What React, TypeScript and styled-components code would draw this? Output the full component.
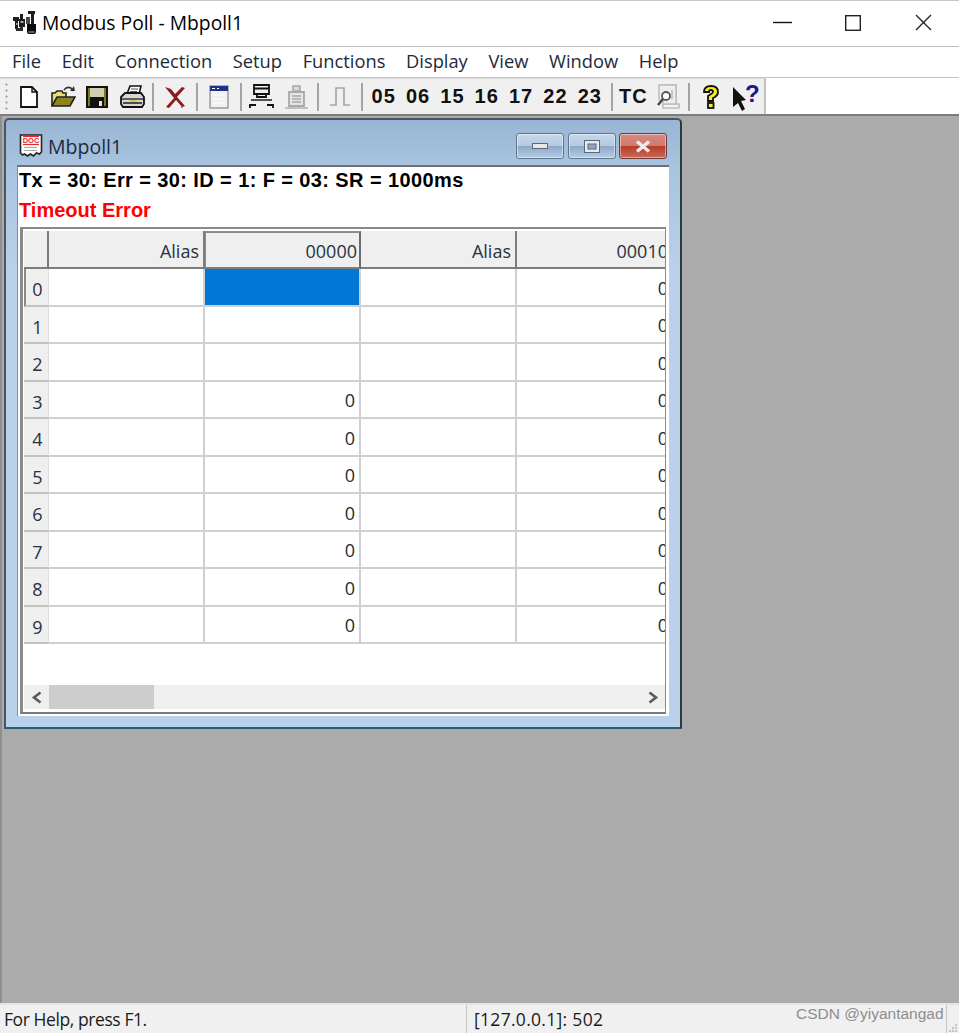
import styled, { createGlobalStyle } from "styled-components";

const GlobalStyle = createGlobalStyle`
  html, body {
    margin: 0;
    padding: 0;
    background: #ababab;
  }
  #root {
    width: 959px;
    height: 1033px;
    overflow: hidden;
  }
`;

const Page = styled.div`
  width: 959px;
  height: 1033px;
  display: flex;
  flex-direction: column;
  font-family: "Open Sans", "Noto Sans", sans-serif;
  color: #111;
`;

/* main frame */
const TitleBar = styled.div`
  height: 46px;
  box-sizing: border-box;
  border-top: 1px solid #c8c8c8;
  background: #fff;
  display: flex;
  align-items: center;
  padding: 0 0 2px 13px;
`;

const AppTitle = styled.div`
  margin-left: 5px;
  font-size: 19.3px;
  color: #000;
  flex: 1;
`;

const CaptionButton = styled.div`
  width: 70.5px;
  height: 44px;
  display: flex;
  align-items: center;
  justify-content: center;
`;

const MenuBar = styled.div`
  height: 32px;
  box-sizing: border-box;
  border-top: 1px solid #bdbdbd;
  border-bottom: 1px solid #c4c4c4;
  background: #fff;
  display: flex;
  align-items: center;
  gap: 20.7px;
  padding: 0 0 3px 12px;
  font-size: 18.3px;
  color: #1c2a3c;
`;

const ToolbarRow = styled.div`
  height: 38px;
  box-sizing: border-box;
  display: flex;
  background: #fff;
  border-bottom: 2px solid #7d7d7d;
`;

const Toolbar = styled.div`
  width: 766px;
  box-sizing: border-box;
  display: flex;
  align-items: center;
  padding-left: 5px;
  background: #f0f0f0;
  border-top: 1px solid #d9d9d9;
  border-right: 2px solid #c0c0c0;
`;

const Grip = styled.div`
  width: 6.5px;
  height: 28px;
  background-image: radial-gradient(circle at 1.5px 1.5px, #b4b4b4 1.3px, transparent 1.4px);
  background-size: 4px 6px;
  background-repeat: repeat-y;
`;

const ToolButton = styled.div`
  width: 34.35px;
  height: 32px;
  display: flex;
  align-items: center;
  justify-content: center;
  font-family: "Liberation Sans", sans-serif;
  font-weight: 700;
  font-size: 20px;
  letter-spacing: 1px;
  color: #111;
`;

const ToolSep = styled.div`
  width: 2px;
  height: 28px;
  margin: 0 3.6px;
  background: #a4a4a4;
`;

/* MDI area */
const Workspace = styled.div`
  flex: 1;
  background: #ababab;
  padding: 2px 0 0 4px;
  border-left: 2px solid #8f8f8f;
`;

const ChildWindow = styled.div`
  width: 678px;
  height: 611px;
  margin-left: -2px;
  box-sizing: border-box;
  border: 2px solid #4c5660;
  border-right-color: #2b3a40;
  border-bottom-color: #25606c;
  border-radius: 5px 5px 0 0;
  background: linear-gradient(180deg, #9ab5d3 0%, #a9c4e0 8%, #b9d1ea 25%);
  display: flex;
  flex-direction: column;
  padding: 0 11px 11px 11px;
`;

const ChildTitle = styled.div`
  height: 45px;
  flex: none;
  display: flex;
  align-items: center;
  padding: 7px 2px 0 2px;
  box-sizing: border-box;
  font-size: 19.5px;
  color: #1b2b3f;
`;

const ChildName = styled.span`
  margin-left: 5px;
  flex: 1;
`;

const WinButton = styled.div<{ $close?: boolean }>`
  width: 48px;
  height: 26px;
  box-sizing: border-box;
  margin-left: 3.5px;
  border: 1px solid ${(p) => (p.$close ? "#6e3a38" : "#5f7690")};
  border-radius: 3px;
  background: ${(p) =>
    p.$close
      ? "linear-gradient(180deg, #d98a80 0%, #cf7a6d 48%, #b93c27 52%, #c96a58 100%)"
      : "linear-gradient(180deg, #c6d8ea 0%, #b4cbe2 48%, #8faac7 52%, #b6cde4 100%)"};
  box-shadow: inset 0 0 0 1px rgba(255, 255, 255, 0.45);
  display: flex;
  align-items: center;
  justify-content: center;
`;

const Client = styled.div`
  flex: 1;
  display: flex;
  flex-direction: column;
  background: #fff;
  border-top: 2px solid #6f6f6f;
  border-left: 1px solid #8a8a8a;
  padding: 0 3px 2px 2px;
`;

const StatusBlock = styled.div`
  height: 61px;
  margin: -1px 0 0 -1px;
  flex: none;
  font-family: "Liberation Sans", sans-serif;
  font-weight: 700;
  font-size: 20px;
  line-height: 29.5px;
  color: #000;
  white-space: nowrap;
`;

const CounterLine = styled.div`
  letter-spacing: 0.4px;
`;

const ErrorLine = styled.div`
  color: #ff0000;
`;

const GridFrame = styled.div`
  flex: 1;
  display: flex;
  flex-direction: column;
  border-top: 2px solid #8a8a8a;
  border-left: 3px solid #8a8a8a;
  border-right: 1px solid #8a8a8a;
  border-bottom: 2px solid #7a7a7a;
  padding-left: 1px;
  overflow: hidden;
`;

const SheetArea = styled.div`
  flex: 1;
  overflow: hidden;
  background: #fff;
  padding-top: 2px;
`;

const Sheet = styled.div`
  width: 650px;
  display: grid;
  grid-template-columns: 25px 156px 156px 156px 157px;
  grid-template-rows: 38px repeat(10, 37.5px);
  font-size: 18px;
`;

const HeadCell = styled.div<{ $active?: boolean }>`
  box-sizing: border-box;
  background: #efefef;
  border-bottom: 2px solid #7c7c7c;
  border-right: 2px solid ${(p) => (p.$active ? "#6c6c6c" : "#7c7c7c")};
  border-left: ${(p) => (p.$active ? "1px solid #8a8a8a" : "0")};
  border-top: ${(p) => (p.$active ? "2px solid #8a8a8a" : "0")};
  color: #26323f;
  display: flex;
  align-items: center;
  justify-content: flex-end;
  padding: ${(p) => (p.$active ? "1px 2px 0 0" : "3px 4px 0 0")};
`;

const RowHead = styled.div<{ $active?: boolean }>`
  box-sizing: border-box;
  background: #efefef;
  border-bottom: 2px solid #c2c2c2;
  border-right: 1px solid #dedede;
  border-left: ${(p) => (p.$active ? "2px solid #8a8a8a" : "0")};
  display: flex;
  align-items: center;
  justify-content: center;
  padding: 5px 0 0 ${(p) => (p.$active ? "1px" : "3px")};
  color: #26323f;
`;

const Cell = styled.div<{ $selected?: boolean }>`
  box-sizing: border-box;
  background: ${(p) => (p.$selected ? "#0078d7" : "#fff")};
  border-bottom: 2px solid #d0d0d0;
  border-right: 2px solid #d0d0d0;
  display: flex;
  align-items: center;
  justify-content: flex-end;
  padding: 2px 4px 0 0;
  color: #2a2a2a;
`;

const ScrollBar = styled.div`
  height: 24px;
  flex: none;
  margin-bottom: 3px;
  background: #efefef;
  display: flex;
  align-items: center;
`;

const ScrollArrow = styled.div`
  width: 25px;
  display: flex;
  justify-content: center;
  flex: none;
`;

const ScrollTrack = styled.div`
  flex: 1;
  height: 100%;
`;

const ScrollThumb = styled.div`
  width: 105px;
  height: 100%;
  background: #cdcdcd;
`;

/* status bar */
const StatusBar = styled.div`
  height: 30px;
  box-sizing: border-box;
  border-top: 2px solid #e4e4e4;
  background: #f0f0f0;
  display: flex;
  align-items: center;
  font-size: 17.5px;
  color: #1b1b1b;
  position: relative;
`;

const HelpPane = styled.div`
  width: 467px;
  height: 100%;
  box-sizing: border-box;
  padding: 2px 0 0 4px;
  border-right: 1px solid #c4c4c4;
  letter-spacing: -0.42px;
  white-space: nowrap;
`;

const AddressPane = styled.div`
  flex: 1;
  height: 100%;
  box-sizing: border-box;
  padding: 2px 0 0 7px;
  letter-spacing: 0.3px;
  white-space: nowrap;
`;

const Watermark = styled.div`
  position: absolute;
  left: 796px;
  top: 0;
  font-family: "Liberation Sans", sans-serif;
  font-size: 15.5px;
  color: #8d8d8d;
`;

const EndPane = styled.div`
  width: 12px;
  height: 100%;
  border-left: 1px solid #c4c4c4;
  display: flex;
  align-items: flex-end;
`;

const AppIcon = () => (
  <svg width="24" height="24" viewBox="0 0 24 24">
    <path d="M0 6h6v4H0zM2 10h3v8H2zM7 3h3v5H7zM6 8h6v8H6z" fill="#1d1d1d" />
    <path d="M7.5 10h3v2h-3zM3 12h1.5v2H3z" fill="#a5a5a5" />
    <path d="M3 17h6v3H3zM7 15h3v5H7z" fill="#2c2c2c" />
    <path d="M15 0h7v3h-7zM18 3h3v10h-3z" fill="#1d1d1d" />
    <path d="M13 6h4v7h-4z" fill="#4a4a4a" />
    <path d="M14 13h9v8q0 2-2 2h-5q-2 0-2-2z" fill="#0c0c0c" />
    <path d="M15.5 20.5h6v1h-6z" fill="#b5b5b5" />
  </svg>
);

const MinGlyph = () => (
  <svg width="20" height="3" viewBox="0 0 20 3">
    <path d="M0 1.5h19" stroke="#111" strokeWidth="1.4" />
  </svg>
);
const MaxGlyph = () => (
  <svg width="16" height="16" viewBox="0 0 16 16">
    <rect x="0.7" y="0.7" width="14.6" height="14.6" fill="none" stroke="#222" strokeWidth="1.4" />
  </svg>
);
const CloseGlyph = () => (
  <svg width="17" height="17" viewBox="0 0 17 17">
    <path d="M1 1l15 15M16 1L1 16" stroke="#222" strokeWidth="1.4" />
  </svg>
);

const NewIcon = () => (
  <svg width="20" height="22" viewBox="0 0 20 22">
    <path d="M2 1h11l5 5v15H2z" fill="#fff" stroke="#111" strokeWidth="1.8" />
    <path d="M13 1v5h5" fill="none" stroke="#111" strokeWidth="1.4" />
  </svg>
);
const OpenIcon = () => (
  <svg width="25" height="22" viewBox="0 0 25 22">
    <path d="M1 20V7h3l2-2h5l1 2h3v4" fill="#e8dd74" stroke="#222" strokeWidth="1.6" />
    <path d="M1 20l5-9h18l-5 9z" fill="#8c8420" stroke="#222" strokeWidth="1.6" />
    <path d="M13 4q3-4 7-2l2 3" fill="none" stroke="#333" strokeWidth="1.6" />
    <path d="M19 5h5l-1-5z" fill="#333" />
  </svg>
);
const SaveIcon = () => (
  <svg width="22" height="22" viewBox="0 0 22 22">
    <path d="M0 0h22v22H0z" fill="#111" />
    <path d="M2 2h2v18H2zM18 2h2v18h-2zM2 2h18v1H2z" fill="#7e7a18" />
    <path d="M4 2h14v9H4z" fill="#cfcfb0" />
    <path d="M5 14h12v7H5z" fill="#111" />
    <path d="M13 15h3v5h-3z" fill="#e6e6e6" />
  </svg>
);
const PrintIcon = () => (
  <svg width="26" height="24" viewBox="0 0 26 24">
    <path d="M8 9L11 1h11l-2 8z" fill="#fff" stroke="#111" strokeWidth="1.6" />
    <path d="M12 4h7M11 6.5h7" stroke="#555" strokeWidth="1" />
    <path d="M2 12l4-4h16l3 4v7l-2 3H4l-2-3z" fill="#d6d6d6" stroke="#111" strokeWidth="1.8" />
    <path d="M2 14h23" stroke="#111" strokeWidth="1.2" />
    <path d="M4 18h19" stroke="#111" strokeWidth="1.4" />
    <path d="M11 15h7v2h-7z" fill="#d9cc3c" />
  </svg>
);
const DeleteIcon = () => (
  <svg width="24" height="24" viewBox="0 0 24 24">
    <path d="M2 2l6 2 4 5 7-7 3 1-8 9 8 9-3 1-6-7-7 8-3-1 8-9z" fill="#8a1c1c" />
    <circle cx="19" cy="22" r="1" fill="#c44" />
  </svg>
);
const WindowIcon = () => (
  <svg width="20" height="24" viewBox="0 0 20 24">
    <path d="M1 1h18v22H1z" fill="#f0f0f0" stroke="#9a9a9a" strokeWidth="1.5" />
    <path d="M1 1h18v5H1z" fill="#22308a" />
    <path d="M3 3h3v1H3zM8 3h2v1H8z" fill="#fff" />
    <path d="M4 10h12M4 14h12M4 18h12" stroke="#fff" strokeWidth="1.2" />
  </svg>
);
const ConnectIcon = () => (
  <svg width="26" height="26" viewBox="0 0 26 26">
    <path d="M5 1h15v9H5zM5 4.5h15" fill="none" stroke="#111" strokeWidth="1.8" />
    <path d="M8 10v3h9v-3" fill="none" stroke="#111" strokeWidth="1.8" />
    <path d="M2 16h21" stroke="#111" strokeWidth="1.4" />
    <path d="M1 24v-3h6M18 21h6v3" fill="none" stroke="#111" strokeWidth="1.8" />
  </svg>
);
const DisconnectIcon = () => (
  <svg width="25" height="26" viewBox="0 0 25 26">
    <path d="M9 2h7v5H9z" fill="#d8d8d8" stroke="#a8a8a8" strokeWidth="1.6" />
    <path d="M5 8h15v14H5z" fill="#e4e4e4" stroke="#a8a8a8" strokeWidth="1.8" />
    <path d="M8 12h9M8 15h9M8 18h9" stroke="#a8a8a8" strokeWidth="1.4" />
    <path d="M1 24h23" stroke="#b4b4b4" strokeWidth="1.6" />
  </svg>
);
const PulseIcon = () => (
  <svg width="22" height="22" viewBox="0 0 22 22">
    <path d="M1 19h6V2h8v17h6" fill="none" stroke="#a6a6a6" strokeWidth="1.7" />
  </svg>
);
const ScanIcon = () => (
  <svg width="24" height="26" viewBox="0 0 24 26">
    <path d="M3 1h17v19h3v4H7v-4h13" fill="#f3f3f3" stroke="#bdbdbd" strokeWidth="1.6" />
    <path d="M3 1h17v19H7v-4H3z" fill="#eee" stroke="#bdbdbd" strokeWidth="1.4" />
    <circle cx="10" cy="12" r="4" fill="#fff" stroke="#555" strokeWidth="1.8" />
    <path d="M7 15l-5 6" stroke="#444" strokeWidth="2.4" />
    <path d="M15 6h2v9h-2z" fill="#c4c4c4" />
  </svg>
);
const HelpIcon = () => (
  <svg width="18" height="26" viewBox="0 0 18 26">
    <path
      d="M2 8q0-6 7-6t7 6q0 3-3 5l-2 1v3H6v-5l3-2q2-1 2-2.5T9 6 7 8z"
      fill="#f6ee1e"
      stroke="#111"
      strokeWidth="1.8"
    />
    <rect x="6" y="19" width="5.5" height="5" fill="#f6ee1e" stroke="#111" strokeWidth="1.8" />
  </svg>
);
const PointerHelpIcon = () => (
  <svg width="27" height="28" viewBox="0 0 27 28">
    <path d="M1 4l13 13-5 1 4 8-3 2-4-8-5 4z" fill="#111" />
    <text
      x="13"
      y="19"
      fontFamily="Liberation Sans, sans-serif"
      fontWeight="700"
      fontSize="24"
      fill="#1a1a8c"
    >
      ?
    </text>
  </svg>
);
const DocIcon = () => (
  <svg width="24" height="24" viewBox="0 0 24 24">
    <path d="M1.5 1h21v17l-2 2-3-1-3 3-3-2-3 2-3-2-2 1-2-2z" fill="#fff" stroke="#222" strokeWidth="1.6" />
    <text
      x="12"
      y="9"
      textAnchor="middle"
      fontFamily="Liberation Sans, sans-serif"
      fontWeight="700"
      fontSize="7.5"
      fill="#e8262c"
    >
      DOC
    </text>
    <path d="M4 2.5h16" stroke="#e8262c" strokeWidth="1.2" />
    <path d="M4 10.5h16" stroke="#e8262c" strokeWidth="1.2" />
    <path d="M5 13.5h13M5 16.5h13" stroke="#aaa" strokeWidth="1" />
  </svg>
);
const Chevron = ({ dir }: { dir: "left" | "right" }) => (
  <svg width="12" height="13" viewBox="0 0 12 13">
    <path
      d={dir === "left" ? "M9.5 1.5L3 6.5l6.5 5" : "M2.5 1.5L9 6.5l-6.5 5"}
      fill="none"
      stroke="#5a5a5a"
      strokeWidth="2.6"
    />
  </svg>
);
const SizeGrip = () => (
  <svg width="11" height="11" viewBox="0 0 11 11">
    <path d="M8 2h2v2H8zM5 5h2v2H5zM8 5h2v2H8zM2 8h2v2H2zM5 8h2v2H5zM8 8h2v2H8z" fill="#c4c4c4" />
  </svg>
);

const menus = ["File", "Edit", "Connection", "Setup", "Functions", "Display", "View", "Window", "Help"];
const codes = ["05", "06", "15", "16", "17", "22", "23"];
const rows = [0, 1, 2, 3, 4, 5, 6, 7, 8, 9];
const headers = ["Alias", "00000", "Alias", "00010"];

function Row({ index }: { index: number }) {
  return (
    <>
      <RowHead $active={index === 0}>{index}</RowHead>
      <Cell />
      <Cell $selected={index === 0}>{index >= 3 ? "0" : ""}</Cell>
      <Cell />
      <Cell>0</Cell>
    </>
  );
}

export default function App() {
  return (
    <Page>
      <GlobalStyle />
      <TitleBar>
        <AppIcon />
        <AppTitle>Modbus Poll - Mbpoll1</AppTitle>
        <CaptionButton>
          <MinGlyph />
        </CaptionButton>
        <CaptionButton>
          <MaxGlyph />
        </CaptionButton>
        <CaptionButton>
          <CloseGlyph />
        </CaptionButton>
      </TitleBar>

      <MenuBar>
        {menus.map((m) => (
          <span key={m}>{m}</span>
        ))}
      </MenuBar>

      <ToolbarRow>
        <Toolbar>
          <Grip />
          <ToolButton><NewIcon /></ToolButton>
          <ToolButton><OpenIcon /></ToolButton>
          <ToolButton><SaveIcon /></ToolButton>
          <ToolButton><PrintIcon /></ToolButton>
          <ToolSep />
          <ToolButton><DeleteIcon /></ToolButton>
          <ToolSep />
          <ToolButton><WindowIcon /></ToolButton>
          <ToolSep />
          <ToolButton><ConnectIcon /></ToolButton>
          <ToolButton><DisconnectIcon /></ToolButton>
          <ToolSep />
          <ToolButton><PulseIcon /></ToolButton>
          <ToolSep />
          {codes.map((c) => (
            <ToolButton key={c}>{c}</ToolButton>
          ))}
          <ToolSep />
          <ToolButton>TC</ToolButton>
          <ToolButton><ScanIcon /></ToolButton>
          <ToolSep />
          <ToolButton><HelpIcon /></ToolButton>
          <ToolButton><PointerHelpIcon /></ToolButton>
        </Toolbar>
      </ToolbarRow>

      <Workspace>
        <ChildWindow>
          <ChildTitle>
            <DocIcon />
            <ChildName>Mbpoll1</ChildName>
            <WinButton>
              <svg width="16" height="6" viewBox="0 0 16 6">
                <rect x="0.5" y="0.5" width="15" height="5" fill="#e8e8e8" stroke="#5a6a7e" />
              </svg>
            </WinButton>
            <WinButton>
              <svg width="16" height="13" viewBox="0 0 16 13">
                <rect x="0.5" y="0.5" width="15" height="12" fill="#e8e8e8" stroke="#5a6a7e" />
                <rect x="4" y="4" width="8" height="5" fill="#8fa8c4" stroke="#5a6a7e" />
              </svg>
            </WinButton>
            <WinButton $close>
              <svg width="16" height="13" viewBox="0 0 16 13">
                <path d="M2 1.5l12 10M14 1.5l-12 10" stroke="#ececec" strokeWidth="3.4" />
              </svg>
            </WinButton>
          </ChildTitle>
          <Client>
            <StatusBlock>
              <CounterLine>Tx = 30: Err = 30: ID = 1: F = 03: SR = 1000ms</CounterLine>
              <ErrorLine>Timeout Error</ErrorLine>
            </StatusBlock>
            <GridFrame>
              <SheetArea>
                <Sheet>
                  <HeadCell />
                  {headers.map((h, i) => (
                    <HeadCell key={i} $active={i === 1}>
                      {h}
                    </HeadCell>
                  ))}
                  {rows.map((r) => (
                    <Row key={r} index={r} />
                  ))}
                </Sheet>
              </SheetArea>
              <ScrollBar>
                <ScrollArrow>
                  <Chevron dir="left" />
                </ScrollArrow>
                <ScrollTrack>
                  <ScrollThumb />
                </ScrollTrack>
                <ScrollArrow>
                  <Chevron dir="right" />
                </ScrollArrow>
              </ScrollBar>
            </GridFrame>
          </Client>
        </ChildWindow>
      </Workspace>

      <StatusBar>
        <HelpPane>For Help, press F1.</HelpPane>
        <AddressPane>[127.0.0.1]: 502</AddressPane>
        <Watermark>CSDN @yiyantangad</Watermark>
        <EndPane>
          <SizeGrip />
        </EndPane>
      </StatusBar>
    </Page>
  );
}
